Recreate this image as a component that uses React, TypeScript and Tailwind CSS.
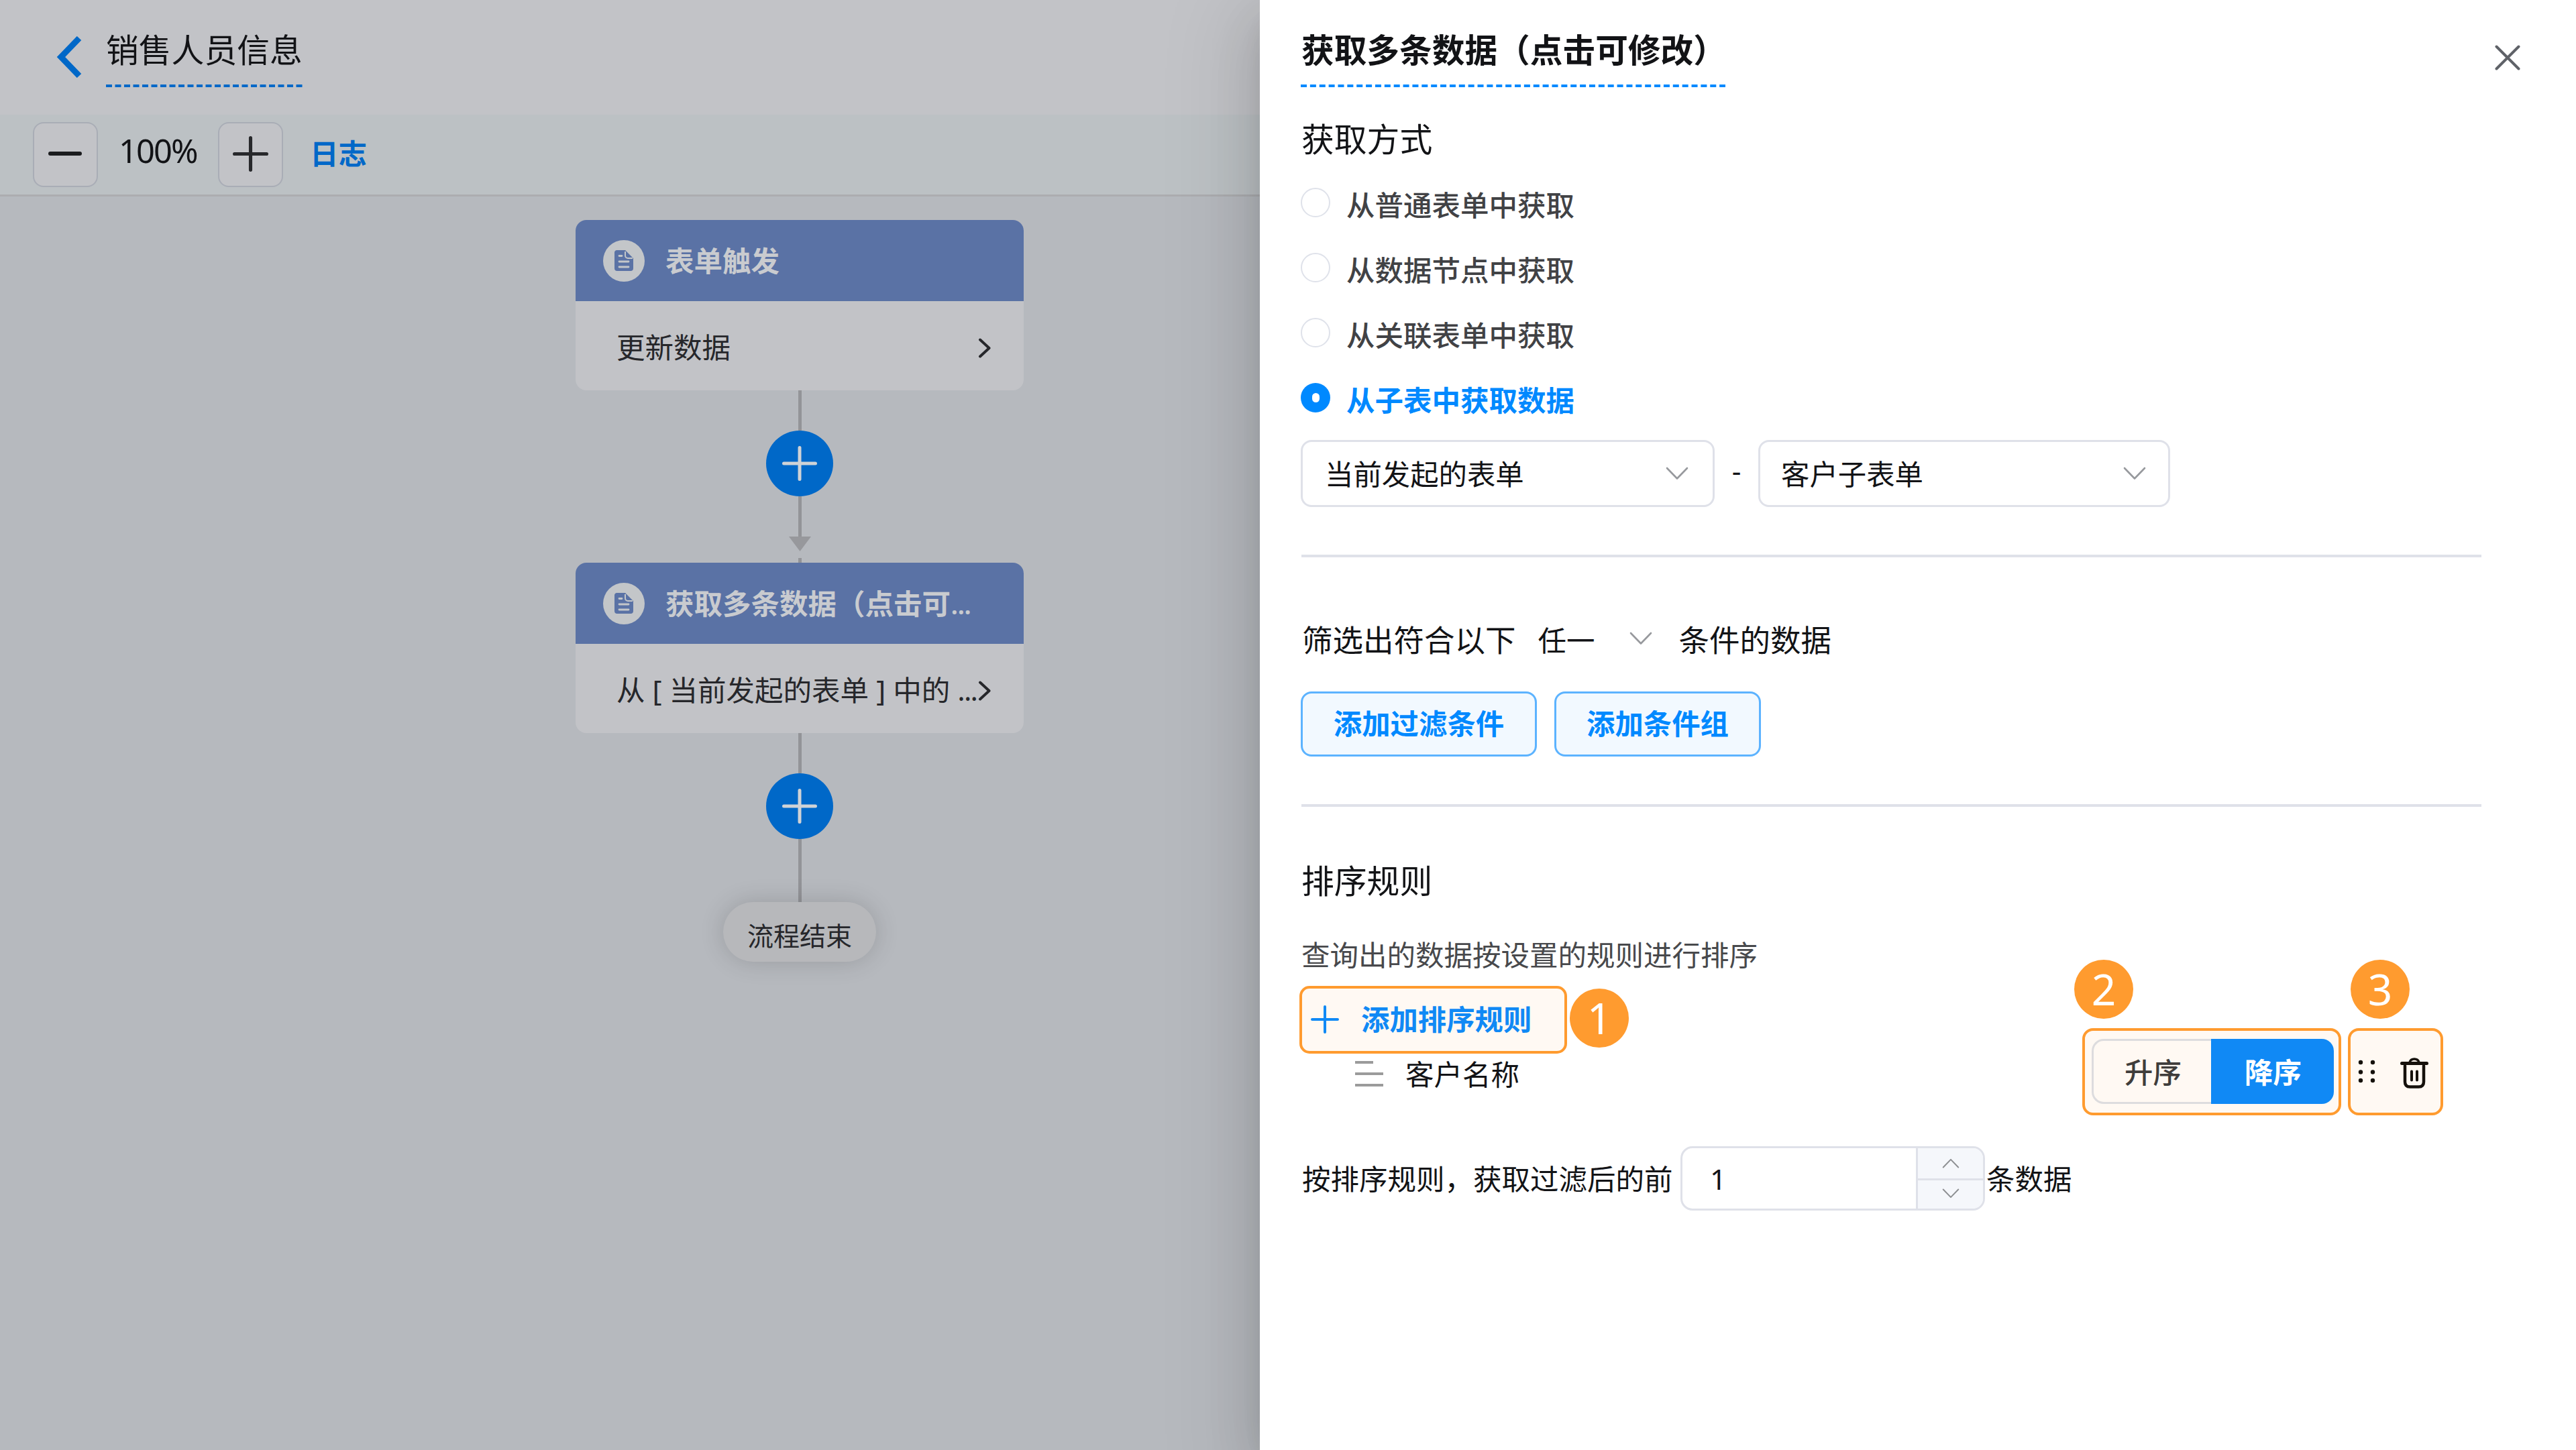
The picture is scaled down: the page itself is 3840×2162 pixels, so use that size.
import type { ReactNode } from 'react';

interface IconProps {
  className?: string;
}

const sourceOptions = [
  { id: 'form', label: '从普通表单中获取' },
  { id: 'node', label: '从数据节点中获取' },
  { id: 'relation', label: '从关联表单中获取' },
  { id: 'subtable', label: '从子表中获取数据' },
];

function PlusIcon({ className }: IconProps) {
  return (
    <svg viewBox="0 0 52 52" fill="none" stroke="currentColor" strokeWidth="5" strokeLinecap="round" className={className}>
      <path d="M26 2.5v47M2.5 26h47" />
    </svg>
  );
}

function ChevronDownIcon({ className }: IconProps) {
  return (
    <svg viewBox="0 0 34 20" fill="none" stroke="currentColor" strokeWidth="2.6" strokeLinecap="round" strokeLinejoin="round" className={className}>
      <path d="M2 2l15 15.500L32 2" />
    </svg>
  );
}

function ChevronRightIcon({ className }: IconProps) {
  return (
    <svg viewBox="0 0 20 30" fill="none" stroke="currentColor" strokeWidth="4" strokeLinecap="round" strokeLinejoin="round" className={className}>
      <path d="M3 2.500L16.500 15L3 27.500" />
    </svg>
  );
}

function DocIcon() {
  return (
    <span className="flex h-[62px] w-[62px] shrink-0 items-center justify-center rounded-full bg-[#c3c6c9]">
      <svg viewBox="0 0 28 31" className="h-[31px] w-[28px]">
        <path d="M3 0h13l12 12v15a4 4 0 0 1-4 4H4a4 4 0 0 1-4-4V4a4 4 0 0 1 3-4z" fill="#5a72a5" />
        <path d="M16 2v6a4 4 0 0 0 4 4h7" fill="none" stroke="#c3c6c9" strokeWidth="2" />
        <path d="M7 8.500h4M7 17h14M7 25h14" stroke="#c3c6c9" strokeWidth="2.800" strokeLinecap="round" />
      </svg>
    </span>
  );
}

function TrashIcon({ className }: IconProps) {
  return (
    <svg viewBox="0 0 42 46" fill="none" stroke="currentColor" strokeLinecap="round" className={className}>
      <path d="M2.500 8.500h37" strokeWidth="5" />
      <path d="M14 7c1-3.500 3.500-5 7-5s6 1.500 7 5" strokeWidth="3.500" />
      <path d="M7 12v24c0 5 2.500 7.500 7.500 7.500h13c5 0 7.500-2.500 7.500-7.500V12" strokeWidth="4.500" />
      <path d="M17 20.500v13M25 20.500v13" strokeWidth="4" />
    </svg>
  );
}

function StepBadge({ children }: { children: ReactNode }) {
  return (
    <span className="flex h-[88px] w-[88px] shrink-0 items-center justify-center rounded-full bg-[#ff9b2f] text-[64px] leading-none text-white">
      {children}
    </span>
  );
}

function FlowNode({ title, children }: { title: ReactNode; children: ReactNode }) {
  return (
    <div className="w-[668px] overflow-hidden rounded-[16px] bg-[#c2c3c7]">
      <div className="flex h-[121px] items-center gap-[31px] bg-[#5a72a5] pl-[41px] text-[42.500px] font-bold leading-none text-[#c9cbcf]">
        <DocIcon />
        <span className="whitespace-nowrap pt-[2px]">{title}</span>
      </div>
      <div className="flex h-[133px] items-center justify-between pl-[61px] pr-[48px] pt-[6px] text-[42.500px] leading-none text-[#26272b]">
        <span className="whitespace-nowrap">{children}</span>
        <ChevronRightIcon className="h-[30px] w-[20px] shrink-0" />
      </div>
    </div>
  );
}

function AddNodeButton() {
  return (
    <button type="button" className="flex h-[98px] w-[100px] items-center justify-center rounded-[50%] bg-[#0068c8] text-[#cfd2d6]">
      <PlusIcon className="h-[52px] w-[52px]" />
    </button>
  );
}

function FlowCanvas() {
  return (
    <section className="flex h-[2162px] w-[1878px] shrink-0 flex-col bg-[#b6b9be]">
      <header className="flex h-[171px] shrink-0 items-start bg-[#c2c3c7] pl-[84px]">
        <svg viewBox="0 0 38 62" fill="none" stroke="#0068c8" strokeWidth="9" className="mt-[54px] h-[62px] w-[38px]">
          <path d="M34 3L7 31l27 28" />
        </svg>
        <div className="ml-[36px]">
          <h1 className="h-[126px] pt-[49px] text-[48.800px] leading-[50px] text-[#121316]">销售人员信息</h1>
          <svg viewBox="0 0 293 4" className="h-[4px] w-[293px]">
            <path d="M0 2h293" stroke="#0068c8" strokeWidth="4" strokeDasharray="9 4.500" />
          </svg>
        </div>
      </header>
      <div className="flex h-[122px] shrink-0 items-center border-b-[3px] border-[#acadb0] bg-[#bcc1c4] pl-[49px]">
        <button type="button" className="flex h-[97px] w-[97px] items-center justify-center rounded-[16px] border-2 border-[#a9adb6] bg-[#c2c3c7] pb-[3px] pr-[2px]">
          <span className="h-[6px] w-[50px] rounded-full bg-[#1b1c1e]" />
        </button>
        <span className="-mt-[12px] ml-[31px] w-[118px] text-[48.800px] leading-none tracking-[-0.040em] text-[#121316]">100%</span>
        <button type="button" className="ml-[30px] flex h-[97px] w-[97px] items-center justify-center rounded-[16px] border-2 border-[#a9adb6] bg-[#c2c3c7] pb-[3px] text-[#27282b]">
          <PlusIcon className="h-[53px] w-[53px]" />
        </button>
        <span className="-mt-[3px] ml-[40px] text-[42.500px] font-bold leading-none text-[#0068c8]">日志</span>
      </div>

      <div className="ml-[858px] mt-[35px] flex w-[668px] flex-col items-center">
        <FlowNode title="表单触发">更新数据</FlowNode>
        <div className="h-[60px] w-[5px] bg-[#939498]" />
        <AddNodeButton />
        <div className="h-[60px] w-[5px] bg-[#939498]" />
        <svg viewBox="0 0 33 22" className="h-[22px] w-[33px]">
          <path d="M0 0h33L16.500 22z" fill="#97989c" />
        </svg>
        <div className="mt-[10px] h-[7px] w-[5px] bg-[#939498]" />
        <FlowNode title={<>获取多条数据（点击可<span className="font-medium tracking-[-0.040em]">...</span></>}>
          从 [ 当前发起的表单 ] 中的 <span className="tracking-[-0.040em]">...</span>
        </FlowNode>
        <div className="h-[60px] w-[5px] bg-[#939498]" />
        <AddNodeButton />
        <div className="h-[94px] w-[5px] bg-[#939498]" />
        <div className="flex h-[89px] w-[228px] items-center justify-center rounded-full bg-[#b7b8bb] pt-[9px] text-[39px] leading-none text-[#26272b] shadow-[0_0_36px_rgba(0,0,0,0.16)]">
          流程结束
        </div>
      </div>
    </section>
  );
}

function Select({ value, className }: { value: string; className: string }) {
  return (
    <div className={`flex h-[100px] items-center justify-between rounded-[16px] border-[3px] border-[#dfe1e9] pb-px text-[42.400px] leading-none ${className}`}>
      <span className="pt-[3px]">{value}</span>
      <ChevronDownIcon className="h-[20px] w-[34px] text-[#97999d]" />
    </div>
  );
}

function SourcePicker() {
  return (
    <div className="mt-[43px]">
      {sourceOptions.map((option) => {
        const selected = option.id === 'subtable';
        return (
          <label key={option.id} className="flex h-[97px] items-center gap-[24px]">
            <span
              className={`-ml-px flex h-[44px] w-[44px] items-center justify-center rounded-full ${
                selected ? 'bg-[#0089ff]' : 'border-2 border-[#dfe2ea]'
              }`}
            >
              {selected && <span className="h-[14px] w-[11px] rounded-full bg-white" />}
            </span>
            <span className={`pt-[9px] text-[42.500px] leading-none ${selected ? 'font-bold text-[#0089ff]' : 'font-medium text-[#414245]'}`}>
              {option.label}
            </span>
          </label>
        );
      })}
    </div>
  );
}

function SortRules() {
  return (
    <div className="flex h-[233px] items-start">
      <div className="-ml-[3px] mt-[39px] w-[491px]">
        <div className="flex items-center gap-[4px]">
          <button type="button" className="flex h-[101px] w-[399px] items-center rounded-[15px] border-4 border-[#ff9b2f] bg-[#fff9f3] pl-[13px] text-[#1089f5]">
            <PlusIcon className="h-[42px] w-[42px]" />
            <span className="ml-[33px] text-[42.400px] font-bold leading-none">添加排序规则</span>
          </button>
          <div className="-mt-[4px]">
            <StepBadge>1</StepBadge>
          </div>
        </div>
        <div className="mt-[10px] flex items-start">
          <svg viewBox="0 0 42 40" fill="none" stroke="#9b9b9b" strokeWidth="4" className="ml-[83px] h-[40px] w-[42px]">
            <path d="M0 3h27M0 20h42M0 37h42" />
          </svg>
          <span className="ml-[33px] text-[42.500px] leading-none">客户名称</span>
        </div>
      </div>

      <div className="ml-[664px]">
        <StepBadge>2</StepBadge>
        <div className="ml-[12px] mt-[14px] flex h-[130px] w-[386px] items-center rounded-[16px] border-4 border-[#ff9b2f] bg-[#fff9f3] pl-[10px]">
          <div className="flex h-[97px] w-[361px] text-[42.400px] leading-none">
            <span className="flex w-[178px] items-center justify-center rounded-l-[18px] border-[3px] border-r-0 border-[#dddcde] pl-[2px] pt-[3px] font-medium text-[#3f3d3b]">升序</span>
            <span className="flex w-[183px] items-center justify-center rounded-r-[18px] bg-[#1089f5] pl-[2px] pt-[3px] font-bold text-white">降序</span>
          </div>
        </div>
      </div>

      <div className="ml-[10px]">
        <div className="ml-[4px]">
          <StepBadge>3</StepBadge>
        </div>
        <div className="mt-[14px] flex h-[130px] w-[142px] items-center rounded-[16px] border-4 border-[#ff9b2f] bg-[#fff9f3] pl-[11px]">
          <svg viewBox="0 0 26 36" className="h-[36px] w-[26px]" fill="#15110c">
            <circle cx="4" cy="4" r="3.200" />
            <circle cx="22" cy="4" r="3.200" />
            <circle cx="4" cy="18.500" r="3.200" />
            <circle cx="22" cy="18.500" r="3.200" />
            <circle cx="4" cy="31" r="3.200" />
            <circle cx="22" cy="31" r="3.200" />
          </svg>
          <TrashIcon className="ml-[37px] mt-[5px] h-[46px] w-[42px] text-[#15110c]" />
        </div>
      </div>
    </div>
  );
}

function LimitRow() {
  return (
    <div className="mt-[45px] flex h-[96px] items-center text-[42.500px] leading-none">
      <span className="w-[565px] whitespace-nowrap pl-px pt-[4px]">按排序规则，获取过滤后的前</span>
      <div className="flex h-[96px] w-[454px] overflow-hidden rounded-[18px] border-[3px] border-[#dfe1e9]">
        <div className="flex flex-1 items-center pl-[41px] pt-[4px]">1</div>
        <div className="flex w-[100px] flex-col border-l-[3px] border-[#dfe1e9] bg-[#f5f7fb] text-[#8d8f92]">
          <div className="flex flex-1 items-center justify-center border-b-[3px] border-[#dfe1e9]">
            <ChevronDownIcon className="h-[15px] w-[26px] rotate-180" />
          </div>
          <div className="flex h-[42px] items-center justify-center pb-[2px]">
            <ChevronDownIcon className="h-[15px] w-[26px]" />
          </div>
        </div>
      </div>
      <span className="ml-[2px] pt-[4px]">条数据</span>
    </div>
  );
}

function SettingsDrawer() {
  return (
    <aside className="relative z-10 h-[2162px] w-[1962px] shrink-0 bg-white pl-[62px] text-[#121316] shadow-[0_39px_118px_39px_rgba(0,0,0,0.080),0_29px_78px_rgba(0,0,0,0.120),0_20px_39px_-20px_rgba(0,0,0,0.160)]">
      <div className="flex h-[130px] items-start justify-between pr-[83px]">
        <div>
          <h2 className="h-[126px] pt-[49px] text-[48.700px] font-bold leading-[50px]">获取多条数据（点击可修改）</h2>
          <svg viewBox="0 0 633 4" className="-ml-px h-[4px] w-[633px]">
            <path d="M0 2h633" stroke="#0089ff" strokeWidth="4" strokeDasharray="9 4.870" />
          </svg>
        </div>
        <svg viewBox="0 0 38 38" fill="none" stroke="#5f6268" strokeWidth="4" strokeLinecap="round" className="mt-[67px] h-[38px] w-[38px]">
          <path d="M2.500 2.500l33 33M35.500 2.500l-33 33" />
        </svg>
      </div>

      <h3 className="mt-[52px] text-[48.800px] leading-[50px]">获取方式</h3>
      <div className="-mt-[22px]">
        <SourcePicker />
      </div>
      <div className="-ml-px mt-[15px] flex items-center">
        <Select value="当前发起的表单" className="w-[617px] pl-[33px] pr-[36px]" />
        <span className="mb-[8px] w-[65px] text-center text-[42.400px] leading-none">-</span>
        <Select value="客户子表单" className="w-[614px] pl-[31px] pr-[33px]" />
      </div>

      <hr className="mt-[71px] w-[1759px] border-t-4 border-[#dfe1e9]" />

      <div className="mt-[99px] flex h-[50px] items-center pl-px text-[45.500px] leading-none">
        <span>筛选出符合以下</span>
        <span className="ml-[33px] text-[42.500px]">任一</span>
        <ChevronDownIcon className="-mt-[6px] ml-[51px] h-[20px] w-[34px] text-[#97999d]" />
        <span className="ml-[40px]">条件的数据</span>
      </div>
      <div className="-ml-px mt-[51px] flex gap-[26px] text-[42.400px] font-bold leading-none text-[#0089ff]">
        <button type="button" className="h-[97px] w-[352px] rounded-[16px] border-[3px] border-[#5cb3ff] bg-[#f2f9ff]">添加过滤条件</button>
        <button type="button" className="h-[97px] w-[308px] rounded-[16px] border-[3px] border-[#5cb3ff] bg-[#f2f9ff]">添加条件组</button>
      </div>

      <hr className="mt-[71px] w-[1759px] border-t-4 border-[#dfe1e9]" />

      <h3 className="mt-[85px] text-[48.800px] leading-[50px]">排序规则</h3>
      <p className="-mb-[15px] mt-[65px] text-[42.500px] leading-none text-[#48494c]">查询出的数据按设置的规则进行排序</p>
      <SortRules />
      <LimitRow />
    </aside>
  );
}

export default function App() {
  return (
    <main className="flex h-[2162px] w-[3840px] overflow-hidden font-['Noto_Sans','Noto_Sans_CJK_SC',sans-serif]">
      <FlowCanvas />
      <SettingsDrawer />
    </main>
  );
}
